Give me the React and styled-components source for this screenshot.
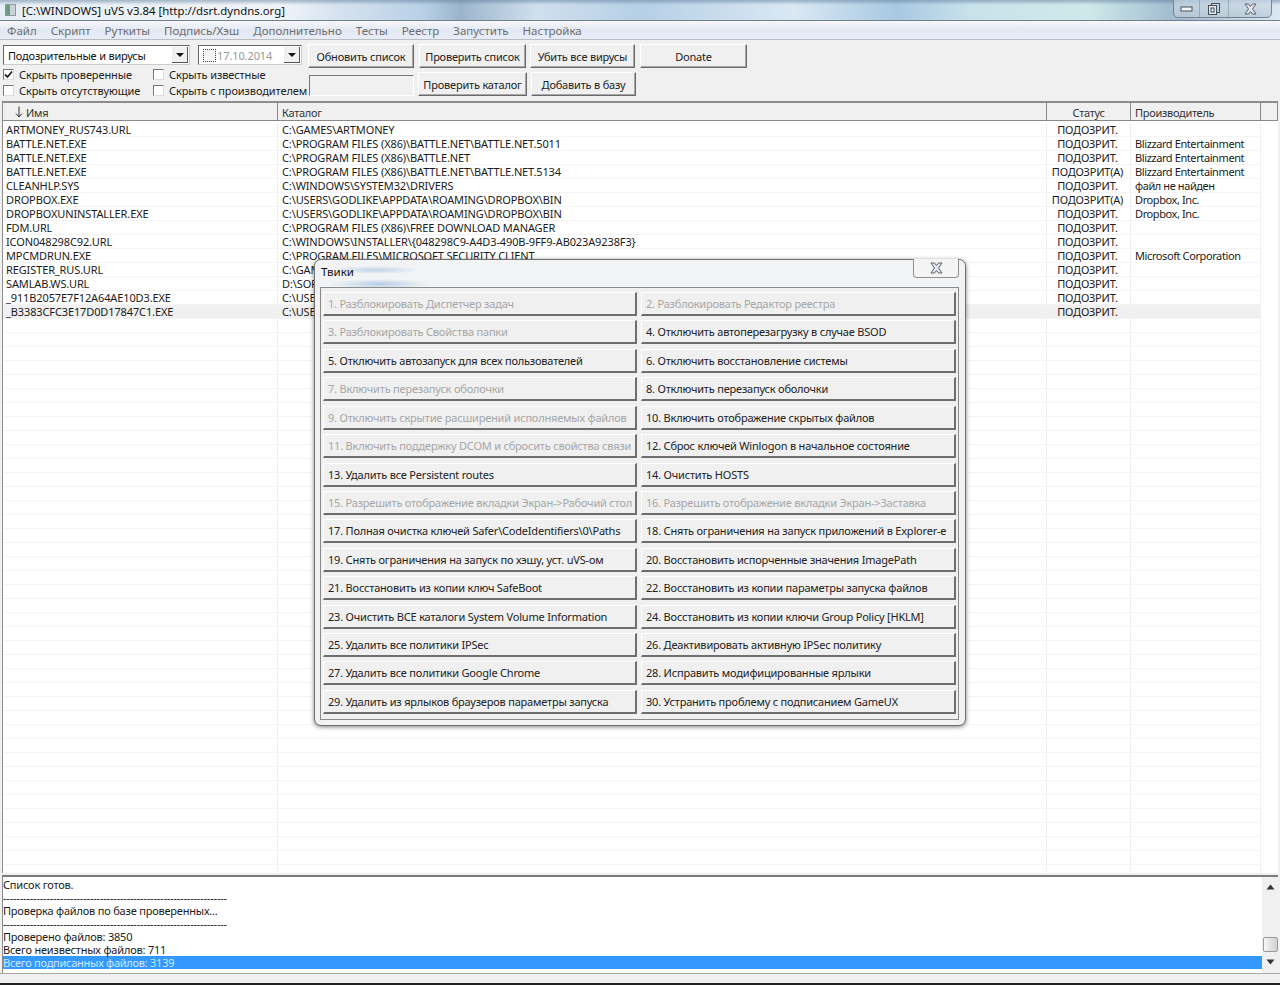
import React from "react";
import styled, { createGlobalStyle } from "styled-components";

const rows = [
  ["ARTMONEY_RUS743.URL", "C:\\GAMES\\ARTMONEY", "ПОДОЗРИТ.", ""],
  ["BATTLE.NET.EXE", "C:\\PROGRAM FILES (X86)\\BATTLE.NET\\BATTLE.NET.5011", "ПОДОЗРИТ.", "Blizzard Entertainment"],
  ["BATTLE.NET.EXE", "C:\\PROGRAM FILES (X86)\\BATTLE.NET", "ПОДОЗРИТ.", "Blizzard Entertainment"],
  ["BATTLE.NET.EXE", "C:\\PROGRAM FILES (X86)\\BATTLE.NET\\BATTLE.NET.5134", "ПОДОЗРИТ(А)", "Blizzard Entertainment"],
  ["CLEANHLP.SYS", "C:\\WINDOWS\\SYSTEM32\\DRIVERS", "ПОДОЗРИТ.", "файл не найден"],
  ["DROPBOX.EXE", "C:\\USERS\\GODLIKE\\APPDATA\\ROAMING\\DROPBOX\\BIN", "ПОДОЗРИТ(А)", "Dropbox, Inc."],
  ["DROPBOXUNINSTALLER.EXE", "C:\\USERS\\GODLIKE\\APPDATA\\ROAMING\\DROPBOX\\BIN", "ПОДОЗРИТ.", "Dropbox, Inc."],
  ["FDM.URL", "C:\\PROGRAM FILES (X86)\\FREE DOWNLOAD MANAGER", "ПОДОЗРИТ.", ""],
  ["ICON048298C92.URL", "C:\\WINDOWS\\INSTALLER\\{048298C9-A4D3-490B-9FF9-AB023A9238F3}", "ПОДОЗРИТ.", ""],
  ["MPCMDRUN.EXE", "C:\\PROGRAM FILES\\MICROSOFT SECURITY CLIENT", "ПОДОЗРИТ.", "Microsoft Corporation"],
  ["REGISTER_RUS.URL", "C:\\GAMES\\ARTMONEY", "ПОДОЗРИТ.", ""],
  ["SAMLAB.WS.URL", "D:\\SOFT\\SAMLAB", "ПОДОЗРИТ.", ""],
  ["_911B2057E7F12A64AE10D3.EXE", "C:\\USERS\\GODLIKE\\APPDATA", "ПОДОЗРИТ.", ""],
  ["_B3383CFC3E17D0D17847C1.EXE", "C:\\USERS\\GODLIKE\\APPDATA", "ПОДОЗРИТ.", ""],
];

const tweaks = [
  ["1. Разблокировать Диспетчер задач", true],
  ["2. Разблокировать Редактор реестра", true],
  ["3. Разблокировать Свойства папки", true],
  ["4. Отключить автоперезагрузку в случае BSOD"],
  ["5. Отключить автозапуск для всех пользователей"],
  ["6. Отключить восстановление системы"],
  ["7. Включить перезапуск оболочки", true],
  ["8. Отключить перезапуск оболочки"],
  ["9. Отключить скрытие расширений исполняемых файлов", true],
  ["10. Включить отображение скрытых файлов"],
  ["11. Включить поддержку DCOM и сбросить свойства связи", true],
  ["12. Сброс ключей Winlogon в начальное состояние"],
  ["13. Удалить все Persistent routes"],
  ["14. Очистить HOSTS"],
  ["15. Разрешить отображение вкладки Экран->Рабочий стол", true],
  ["16. Разрешить отображение вкладки Экран->Заставка", true],
  ["17. Полная очистка ключей Safer\\CodeIdentifiers\\0\\Paths"],
  ["18. Снять ограничения на запуск приложений в Explorer-е"],
  ["19. Снять ограничения на запуск по хэшу, уст. uVS-ом"],
  ["20. Восстановить испорченные значения ImagePath"],
  ["21. Восстановить из копии ключ SafeBoot"],
  ["22. Восстановить из копии параметры запуска файлов"],
  ["23. Очистить ВСЕ каталоги System Volume Information"],
  ["24. Восстановить из копии ключи Group Policy [HKLM]"],
  ["25. Удалить все политики IPSec"],
  ["26. Деактивировать активную IPSec политику"],
  ["27. Удалить все политики Google Chrome"],
  ["28. Исправить модифицированные ярлыки"],
  ["29. Удалить из ярлыков браузеров параметры запуска"],
  ["30. Устранить проблему с подписанием GameUX"],
];

const menu = ["Файл", "Скрипт", "Руткиты", "Подпись/Хэш", "Дополнительно", "Тесты", "Реестр", "Запустить", "Настройка"];

const dashes = "-".repeat(67);
const log = [
  "Список готов.",
  dashes,
  "Проверка файлов по базе проверенных...",
  dashes,
  "Проверено файлов: 3850",
  "Всего неизвестных файлов: 711",
];

export default function App() {
  return (
    <Screen>
      <Global />
      <TitleBar>
        <AppIcon />
        <TitleText>[C:\WINDOWS] uVS v3.84 [http://dsrt.dyndns.org]</TitleText>
        <WindowButtons>
          <WinBtn $w={26}>
            <svg width="13" height="8" viewBox="0 0 13 8"><rect x="1" y="2" width="11" height="4" fill="#f4f6f8" stroke="#4a5058" /></svg>
          </WinBtn>
          <WinBtn $w={29}>
            <svg width="12" height="12" viewBox="0 0 12 12"><rect x="3.5" y="0.5" width="8" height="9" fill="none" stroke="#4a5058" /><rect x="0.5" y="2.5" width="8" height="9" fill="#dfe6ec" stroke="#4a5058" /><rect x="3" y="5" width="3" height="4" fill="none" stroke="#4a5058" /></svg>
          </WinBtn>
          <WinBtn $w={42}>
            <CloseGlyph />
          </WinBtn>
        </WindowButtons>
      </TitleBar>

      <MenuBar>
        {menu.map((m) => (
          <MenuItem key={m}>{m}</MenuItem>
        ))}
      </MenuBar>

      <Toolbar>
        <ToolRow>
          <Combo $w={187}>
            <ComboText>Подозрительные и вирусы</ComboText>
            <ComboArrow />
          </Combo>
          <Combo $w={104} $ml={8}>
            <DateCheck />
            <DateText>17.10.2014</DateText>
            <ComboArrow />
          </Combo>
          <ToolButton $w={106} $ml={6}>Обновить список</ToolButton>
          <ToolButton $w={107} $ml={5}>Проверить список</ToolButton>
          <ToolButton $w={105} $ml={4}>Убить все вирусы</ToolButton>
          <ToolButton $w={107} $ml={5}>Donate</ToolButton>
        </ToolRow>
        <ToolRow>
          <CheckGrid>
            <CheckItem><CheckBox $on><CheckMark /></CheckBox>Скрыть проверенные</CheckItem>
            <CheckItem><CheckBox />Скрыть известные</CheckItem>
            <CheckItem><CheckBox />Скрыть отсутствующие</CheckItem>
            <CheckItem><CheckBox />Скрыть с производителем</CheckItem>
          </CheckGrid>
          <PathInput />
          <ToolButton $w={109} $ml={4}>Проверить каталог</ToolButton>
          <ToolButton $w={105} $ml={4}>Добавить в базу</ToolButton>
        </ToolRow>
      </Toolbar>

      <ListFrame>
        <HeaderRow>
          <HeadCell>
            <SortArrow viewBox="0 0 8 12"><path d="M4 0.5V11M1 7.5L4 11L7 7.5" fill="none" stroke="#333" strokeWidth="1" /></SortArrow>
            Имя
          </HeadCell>
          <HeadCell>Каталог</HeadCell>
          <HeadCell $center>Статус</HeadCell>
          <HeadCell>Производитель</HeadCell>
          <HeadCell />
        </HeaderRow>
        <ListBody>
          {rows.map((r, i) => (
            <Row key={i} $hl={i === rows.length - 1}>
              <Cell>{r[0]}</Cell>
              <Cell>{r[1]}</Cell>
              <Cell $center>{r[2]}</Cell>
              <Cell $vendor>{r[3]}</Cell>
              <Tail />
            </Row>
          ))}
          {Array.from({ length: 40 }, (_, i) => (
            <Row key={i}>
              <Cell />
              <Cell />
              <Cell />
              <Cell />
              <Tail />
            </Row>
          ))}
        </ListBody>
      </ListFrame>

      <LogPane>
        <LogLines>
          {log.map((l, i) => (
            <LogLine key={i}>{l}</LogLine>
          ))}
          <LogLine $sel>Всего подписанных файлов: 3139</LogLine>
        </LogLines>
        <ScrollBar>
          <ScrollArrow viewBox="0 0 9 6"><path d="M4.5 0.5L8.5 5.5H0.5Z" fill="#333" /></ScrollArrow>
          <ScrollThumb />
          <ScrollArrow viewBox="0 0 9 6"><path d="M4.5 5.5L8.5 0.5H0.5Z" fill="#333" /></ScrollArrow>
        </ScrollBar>
      </LogPane>
      <StatusBar />

      <Dialog>
        <DialogHead>
          <DialogTitle>Твики</DialogTitle>
          <DialogClose><CloseGlyph /></DialogClose>
        </DialogHead>
        <TweakPanel>
          {tweaks.map(([label, off]) => (
            <TweakButton key={label} $off={off}>{label}</TweakButton>
          ))}
        </TweakPanel>
      </Dialog>
    </Screen>
  );
}

function CloseGlyph() {
  return (
    <svg width="15" height="12" viewBox="0 0 15 12">
      <path d="M2 1H5.5L7.5 3.5L9.5 1H13L9.5 6L13 11H9.5L7.5 8.5L5.5 11H2L5.5 6Z" fill="#e4e8ec" stroke="#5a6068" strokeWidth="1" />
    </svg>
  );
}

function CheckMark() {
  return (
    <svg width="9" height="9" viewBox="0 0 9 9">
      <path d="M1 4.5L3.5 7L8 1.5" fill="none" stroke="#222" strokeWidth="1.8" />
    </svg>
  );
}

const Global = createGlobalStyle`
  html, body {
    margin: 0;
    padding: 0;
    background: #f0f0f0;
  }
  * {
    box-sizing: border-box;
  }
`;

const Screen = styled.div`
  position: relative;
  width: 1280px;
  height: 985px;
  overflow: hidden;
  display: flex;
  flex-direction: column;
  background: #f0f0f0;
  color: #111;
  font-family: "Noto Sans", "Liberation Sans", sans-serif;
  font-size: 11px;
`;

const TitleBar = styled.div`
  position: relative;
  height: 21px;
  flex: none;
  display: flex;
  align-items: center;
  padding-left: 5px;
  border-bottom: 1px solid #6f7f8c;
  background:
    linear-gradient(180deg, rgba(90, 120, 150, 0.5) 0, rgba(255, 255, 255, 0) 5px),
    linear-gradient(90deg, #e6eef5 0, #f0f4f8 22%, #d7e4f0 26%, #b9d0e6 33%, #9cb5cc 36%, #cfe0ee 42%, #b6cfe6 50%, #d9e8f3 62%, #a8c8e2 70%, #c9e2ea 76%, #cfe9ea 85%, #9fb9cf 92%, #dbe8f2 100%);
`;

const AppIcon = styled.div`
  width: 11px;
  height: 12px;
  background: linear-gradient(90deg, #6e9a7e 0, #6e9a7e 50%, #c9d3da 50%);
  border: 1px solid #8a98a4;
`;

const TitleText = styled.div`
  margin-left: 6px;
  font-size: 11.4px;
  color: #111;
  white-space: nowrap;
`;

const WindowButtons = styled.div`
  position: absolute;
  right: 8px;
  top: -1px;
  height: 19px;
  display: flex;
  border: 1px solid #75848f;
  border-radius: 0 0 5px 5px;
  background: linear-gradient(180deg, rgba(213, 225, 234, 0.6), rgba(185, 202, 215, 0.8));
`;

const WinBtn = styled.div`
  width: ${(p) => p.$w}px;
  display: flex;
  align-items: center;
  justify-content: center;
  border-right: 1px solid rgba(120, 135, 148, 0.5);
  &:last-child {
    border-right: 0;
  }
`;

const MenuBar = styled.div`
  height: 19px;
  flex: none;
  display: flex;
  align-items: center;
  padding-left: 7px;
  gap: 14px;
  color: #6d6d6d;
  font-size: 11.5px;
  background: linear-gradient(180deg, #f7f8fb 0, #e3e8f3 50%, #e8edf6 100%);
  border-bottom: 1px solid #b9bcc4;
`;

const MenuItem = styled.span`
  white-space: nowrap;
`;

const Toolbar = styled.div`
  height: 61px;
  flex: none;
  padding: 4px 0 0 3px;
  display: flex;
  flex-direction: column;
  gap: 4px;
  background: #f0f0f0;
`;

const ToolRow = styled.div`
  display: flex;
  align-items: flex-start;
`;

const Combo = styled.div`
  width: ${(p) => p.$w}px;
  height: 20px;
  margin-top: 1px;
  margin-left: ${(p) => p.$ml || 0}px;
  display: flex;
  align-items: center;
  padding-left: 4px;
  letter-spacing: -0.2px;
  background: #fff;
  border: 1px solid #666;
  border-right-color: #ccc;
  border-bottom-color: #ccc;
`;

const ComboText = styled.span`
  flex: 1;
  white-space: nowrap;
`;

const DateText = styled.span`
  flex: 1;
  color: #9a9a9a;
  letter-spacing: -0.1px;
  margin-left: 1px;
`;

const DateCheck = styled.span`
  width: 13px;
  height: 13px;
  flex: none;
  border: 1px dotted #444;
  background: #f6f6f6;
`;

const ComboArrow = styled.span`
  width: 16px;
  height: 16px;
  margin-right: 1px;
  flex: none;
  background: #f0f0f0;
  border-right: 1px solid #555;
  border-bottom: 1px solid #555;
  display: flex;
  align-items: center;
  justify-content: center;
  &::after {
    content: "";
    border-left: 4px solid transparent;
    border-right: 4px solid transparent;
    border-top: 4px solid #111;
  }
`;

const ToolButton = styled.div`
  width: ${(p) => p.$w}px;
  height: 24px;
  margin-left: ${(p) => p.$ml || 0}px;
  flex: none;
  display: flex;
  align-items: center;
  justify-content: center;
  white-space: nowrap;
  letter-spacing: -0.2px;
  color: #222;
  background: #f0f0f0;
  border: 1px solid;
  border-color: #fff #6a6a6a #6a6a6a #fff;
  box-shadow: inset -1px -1px 0 #a8a8a8;
`;

const CheckGrid = styled.div`
  width: 306px;
  margin-top: -6px;
  display: grid;
  grid-template-columns: 150px 1fr;
  grid-auto-rows: 16px;
  letter-spacing: -0.1px;
  color: #222;
`;

const CheckItem = styled.div`
  display: flex;
  align-items: center;
  gap: 5px;
  white-space: nowrap;
`;

const CheckBox = styled.span`
  width: 11px;
  height: 11px;
  flex: none;
  display: flex;
  align-items: center;
  justify-content: center;
  background: #fff;
  border: 1px solid #777;
  border-right-color: #ddd;
  border-bottom-color: #ddd;
`;

const PathInput = styled.div`
  width: 105px;
  height: 21px;
  margin-top: 3px;
  background: #f0f0f0;
  border: 1px solid;
  border-color: #777 #fff #fff #777;
`;

const ListFrame = styled.div`
  height: 772px;
  flex: none;
  margin: 0 2px;
  display: flex;
  flex-direction: column;
  border-top: 2px solid #8d8d8d;
  border-left: 1px solid #8d8d8d;
  background: #fff;
`;

const cols = "275px 769px 84px 130px 1fr";

const HeaderRow = styled.div`
  display: grid;
  grid-template-columns: ${cols};
  height: 18px;
  flex: none;
  letter-spacing: -0.3px;
  background: #f0f0f0;
  border-bottom: 1px solid #8a8a8a;
`;

const HeadCell = styled.div`
  display: flex;
  align-items: center;
  justify-content: ${(p) => (p.$center ? "center" : "flex-start")};
  padding-top: 1px;
  padding-left: ${(p) => (p.$center ? 0 : 4)}px;
  border-right: 1px solid #8a8a8a;
  color: #333;
  white-space: nowrap;
`;

const SortArrow = styled.svg`
  width: 8px;
  height: 12px;
  margin: 0 3px 0 8px;
`;

const ListBody = styled.div`
  flex: 1;
  padding-top: 2px;
  overflow: hidden;
  background: #fff;
`;

const Row = styled.div`
  display: grid;
  grid-template-columns: ${cols};
  height: 14px;
  box-shadow: inset 0 -1px 0 #f4f4f4;
  background: ${(p) => (p.$hl ? "#f0f0f0" : "transparent")};
`;

const Cell = styled.div`
  padding-left: ${(p) => (p.$center ? 0 : 4)}px;
  padding-right: ${(p) => (p.$center ? 2 : 0)}px;
  text-align: ${(p) => (p.$center ? "center" : "left")};
  letter-spacing: ${(p) => (p.$vendor ? -0.4 : p.$center ? -0.2 : -0.12)}px;
  line-height: 14px;
  color: #1b1b1b;
  white-space: nowrap;
  overflow: hidden;
  border-right: 1px solid #f0f0f0;
  &:first-child {
    padding-left: 3px;
  }
`;

const Tail = styled.div`
  background: #fff;
`;

const LogPane = styled.div`
  height: 98px;
  flex: none;
  margin: 2px 2px 0;
  display: flex;
  background: #fff;
  border-top: 2px solid #7c7c7c;
  border-left: 1px solid #8d8d8d;
`;

const LogLines = styled.div`
  flex: 1;
  padding-top: 1px;
`;

const LogLine = styled.div`
  height: 13px;
  line-height: 13px;
  letter-spacing: ${(p) => (p.$sel ? -0.26 : -0.2)}px;
  white-space: nowrap;
  background: ${(p) => (p.$sel ? "#3399ff" : "transparent")};
  color: ${(p) => (p.$sel ? "#cfe8ff" : "#1b1b1b")};
`;

const ScrollBar = styled.div`
  width: 16px;
  flex: none;
  display: flex;
  flex-direction: column;
  align-items: center;
  padding: 7px 0 8px;
  background: #f0f0f0;
`;

const ScrollArrow = styled.svg`
  width: 9px;
  height: 6px;
  flex: none;
`;

const ScrollThumb = styled.div`
  width: 15px;
  height: 15px;
  flex: none;
  margin: auto 0 7px;
  border: 1px solid #9a9a9a;
  border-radius: 2px;
  background: linear-gradient(90deg, #f6f6f6, #d0d0d0);
`;

const StatusBar = styled.div`
  flex: 1;
  background: #f0f0f0;
  border-top: 1px solid #a8a8a8;
  border-bottom: 2px solid #222;
`;

const Dialog = styled.div`
  position: absolute;
  left: 314px;
  top: 259px;
  width: 652px;
  height: 467px;
  display: flex;
  flex-direction: column;
  padding: 0 6px 5px 5px;
  border: 1px solid #6f6f6f;
  border-radius: 7px;
  background: #f2f2f2;
  box-shadow: 0 1px 4px rgba(0, 0, 0, 0.5);
`;

const DialogHead = styled.div`
  position: relative;
  height: 27px;
  flex: none;
  margin: 0 -6px 0 -5px;
  padding: 4px 6px 0;
  border-radius: 7px 7px 0 0;
  background:
    radial-gradient(ellipse 45px 4px at 60px 10px, rgba(150, 185, 225, 0.55), transparent),
    radial-gradient(ellipse 50px 5px at 65px 24px, rgba(140, 180, 225, 0.6), transparent),
    #f2f3f4;
`;

const DialogTitle = styled.div`
  font-size: 11.5px;
  color: #111;
`;

const DialogClose = styled.div`
  position: absolute;
  right: 6px;
  top: -1px;
  width: 46px;
  height: 19px;
  display: flex;
  align-items: center;
  justify-content: center;
  border: 1px solid #8f8f8f;
  border-top: 0;
  border-radius: 0 0 4px 4px;
  background: #f4f4f4;
`;

const TweakPanel = styled.div`
  flex: 1;
  display: grid;
  grid-template-columns: 314px 315px;
  grid-auto-rows: 24px;
  column-gap: 4px;
  row-gap: 4.43px;
  padding: 4px 2px 0;
  border: 1px solid #8a8a8a;
  background: #f0f0f0;
`;

const TweakButton = styled.div`
  display: flex;
  align-items: center;
  padding-left: 4px;
  white-space: nowrap;
  overflow: hidden;
  letter-spacing: -0.2px;
  color: ${(p) => (p.$off ? "#a6a6a6" : "#222")};
  background: #f0f0f0;
  border-top: 1px solid #fff;
  border-left: 1px solid #fff;
  border-right: 2px solid #6e6e6e;
  border-bottom: 2px solid #6e6e6e;
`;
